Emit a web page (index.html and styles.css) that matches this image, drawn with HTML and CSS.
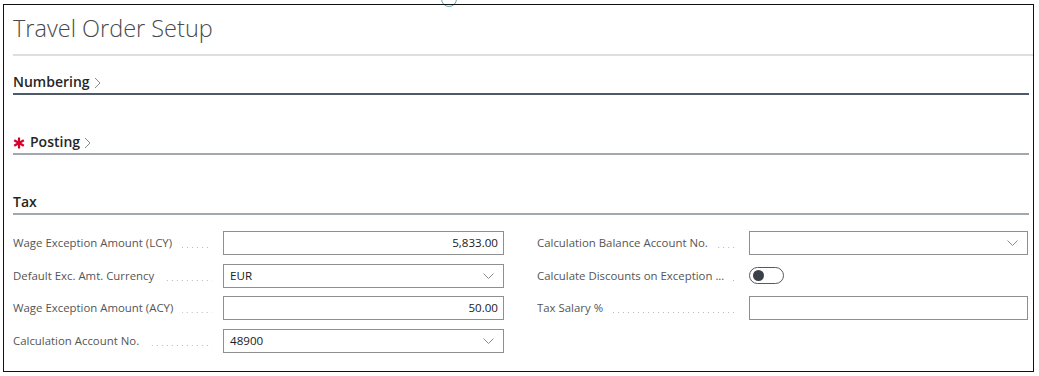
FILE: index.html
```html
<!DOCTYPE html>
<html>
<head>
<meta charset="utf-8">
<link rel="stylesheet" href="styles.css">
</head>
<body>
<div class="ring"></div>
<div class="frame">
  <div class="title-block">
    <h1 class="title">Travel Order Setup</h1>
  </div>
  <div class="section first">
    <div class="sec-head dark">
      <span class="sec-name">Numbering</span>
      <svg class="chev" width="7" height="12" viewBox="0 0 7 12"><polyline points="1,1 6,6 1,11" fill="none" stroke="#8a8a8a" stroke-width="1"/></svg>
    </div>
  </div>
  <div class="section">
    <div class="sec-head">
      <svg class="req" width="12" height="12" viewBox="0 0 12 12"><g stroke="#d6002a" stroke-width="2.2" stroke-linecap="butt"><line x1="6" y1="0.5" x2="6" y2="11.5"/><line x1="1.2" y1="3.2" x2="10.8" y2="8.8"/><line x1="1.2" y1="8.8" x2="10.8" y2="3.2"/></g></svg>
      <span class="sec-name">Posting</span>
      <svg class="chev" width="7" height="12" viewBox="0 0 7 12"><polyline points="1,1 6,6 1,11" fill="none" stroke="#8a8a8a" stroke-width="1"/></svg>
    </div>
  </div>
  <div class="section">
    <div class="sec-head">
      <span class="sec-name">Tax</span>
    </div>
    <div class="fields">
      <div class="col">
        <div class="row">
          <div class="label"><span class="ltext">Wage Exception Amount (LCY)</span><span class="dots"></span></div>
          <div class="input num">5,833.00</div>
        </div>
        <div class="row">
          <div class="label"><span class="ltext">Default Exc. Amt. Currency</span><span class="dots"></span></div>
          <div class="input sel"><span>EUR</span><svg class="dd" width="11" height="6" viewBox="0 0 11 6"><polyline points="0.5,0.5 5.5,5.5 10.5,0.5" fill="none" stroke="#8a8a8a" stroke-width="1"/></svg></div>
        </div>
        <div class="row">
          <div class="label"><span class="ltext">Wage Exception Amount (ACY)</span><span class="dots"></span></div>
          <div class="input num">50.00</div>
        </div>
        <div class="row">
          <div class="label"><span class="ltext">Calculation Account No.</span><span class="dots"></span></div>
          <div class="input sel"><span>48900</span><svg class="dd" width="11" height="6" viewBox="0 0 11 6"><polyline points="0.5,0.5 5.5,5.5 10.5,0.5" fill="none" stroke="#8a8a8a" stroke-width="1"/></svg></div>
        </div>
      </div>
      <div class="col right">
        <div class="row">
          <div class="label"><span class="ltext">Calculation Balance Account No.</span><span class="dots"></span></div>
          <div class="input sel"><span></span><svg class="dd" width="11" height="6" viewBox="0 0 11 6"><polyline points="0.5,0.5 5.5,5.5 10.5,0.5" fill="none" stroke="#8a8a8a" stroke-width="1"/></svg></div>
        </div>
        <div class="row">
          <div class="label"><span class="ltext">Calculate Discounts on Exception ...</span><span class="dots"></span></div>
          <div class="toggle-cell"><span class="toggle"><span class="knob"></span></span></div>
        </div>
        <div class="row">
          <div class="label"><span class="ltext">Tax Salary %</span><span class="dots"></span></div>
          <div class="input"></div>
        </div>
      </div>
    </div>
  </div>
</div>
</body>
</html>
```

FILE: styles.css
```css
html, body {
  margin: 0;
  padding: 0;
  background: #fff;
}
body {
  font-family: "Segoe UI", "Open Sans", "Noto Sans", sans-serif;
  position: relative;
  width: 1039px;
  height: 376px;
  overflow: hidden;
}
.ring {
  position: absolute;
  left: 441px;
  top: -9px;
  width: 14px;
  height: 14px;
  border: 1.5px solid #5fa9a8;
  border-radius: 50%;
}
.frame {
  position: relative;
  margin: 4px 0 0 3px;
  height: 366px;
  border: 1px solid #111;
  padding-left: 9px;
  box-sizing: content-box;
  width: 1020px;
}
.title-block {
  height: 32px;
  padding: 7px 0 10px 0;
  border-bottom: 2px solid #dcdee1;
}
.title {
  margin: 0;
  font-size: 23.5px;
  line-height: 32px;
  font-weight: 300;
  color: #4a4a4a;
}
.section {
  margin-right: 4px;
  margin-top: 36px;
}
.section.first {
  margin-top: 15px;
}
.sec-head {
  display: flex;
  align-items: center;
  height: 20px;
  padding-top: 1px;
  padding-bottom: 1px;
  border-bottom: 2px solid #a3a8b0;
}
.sec-head.dark {
  border-bottom-color: #4f5a69;
}
.sec-name {
  font-size: 14px;
  line-height: 20px;
  font-weight: 600;
  color: #262626;
}
.chev {
  margin-left: 4px;
  margin-top: 2px;
}
.req {
  margin-right: 5px;
  margin-top: 1px;
}
.fields {
  display: grid;
  grid-template-columns: 491px 491px;
  column-gap: 33px;
  padding-top: 16px;
}
.col {
  display: flex;
  flex-direction: column;
  gap: 8.5px;
}
.row {
  display: grid;
  grid-template-columns: 210px 1fr;
  height: 24px;
}
.col.right .row {
  grid-template-columns: 212px 1fr;
}
.label {
  display: flex;
  align-items: center;
  font-size: 11.4px;
  color: #555;
  padding-right: 11px;
  white-space: nowrap;
  overflow: hidden;
}
.ltext {
  line-height: 16px;
}
.dots {
  flex: 1;
  align-self: center;
  height: 16px;
  margin-left: 9px;
  background-image: linear-gradient(to right, #b8b8b8 1px, transparent 1px);
  background-size: 5px 1px;
  background-repeat: repeat-x;
  background-position: right 12px;
}
.input {
  box-sizing: border-box;
  height: 24px;
  border: 1px solid #8f8f8f;
  font-size: 11.6px;
  color: #202020;
  line-height: 22px;
  padding: 0 5px 0 6px;
}
.input.num {
  text-align: right;
}
.input.sel {
  display: flex;
  justify-content: space-between;
  align-items: center;
}
.dd {
  margin-right: 4px;
}
.toggle-cell {
  display: flex;
  align-items: center;
}
.toggle {
  box-sizing: border-box;
  width: 35px;
  height: 17px;
  border: 1px solid #555a60;
  border-radius: 9px;
  display: flex;
  align-items: center;
  padding-left: 3px;
}
.knob {
  width: 11px;
  height: 11px;
  border-radius: 50%;
  background: #3a3f48;
}
```
